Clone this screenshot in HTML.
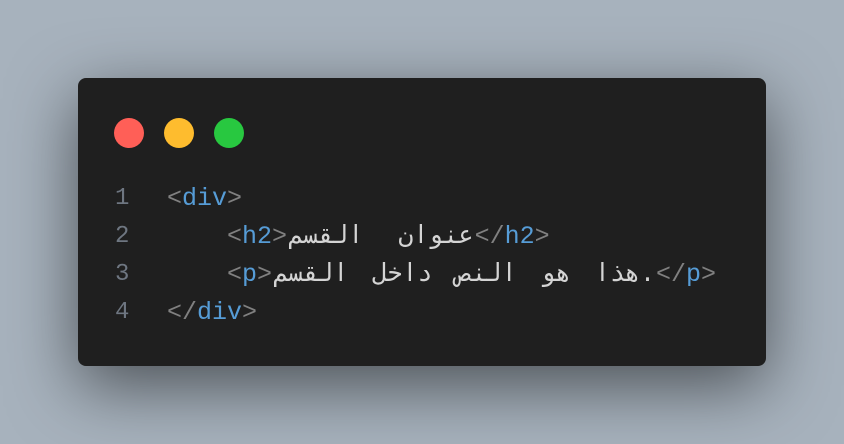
<!DOCTYPE html>
<html><head><meta charset="utf-8"><style>
html,body{margin:0;width:844px;height:444px;overflow:hidden;background:#a7b2bd;}
.card{position:absolute;left:78px;top:78px;width:688px;height:288px;background:#1f1f1f;border-radius:8px;box-shadow:0 20px 68px rgba(0,0,0,0.55);}
.dot{position:absolute;top:40px;width:30px;height:30px;border-radius:50%;}
.code{position:absolute;left:0;top:102px;font-family:"Liberation Mono","DejaVu Sans Mono",monospace;font-size:25px;line-height:38px;color:#d4d4d4;white-space:pre;}
.ln{position:absolute;left:37px;width:30px;color:#6e7681;font-size:24px;}
.l{position:absolute;left:89px;}
.b{color:#808080}.t{color:#569cd6}
.a2{word-spacing:20px;padding:0 1px}
.a3{word-spacing:9px;padding:0 1px}
</style></head><body>
<div class="card">
<div class="dot" style="left:36px;background:#ff5f57"></div>
<div class="dot" style="left:86px;background:#febc2e"></div>
<div class="dot" style="left:136px;background:#28c840"></div>
<div class="code">
<div class="ln" style="top:0">1</div><div class="l" style="top:0"><span class="b">&lt;</span><span class="t">div</span><span class="b">&gt;</span></div>
<div class="ln" style="top:38px">2</div><div class="l" style="top:38px">    <span class="b">&lt;</span><span class="t">h2</span><span class="b">&gt;</span><span class="a2">عنوان القسم</span><span class="b">&lt;/</span><span class="t">h2</span><span class="b">&gt;</span></div>
<div class="ln" style="top:76px">3</div><div class="l" style="top:76px">    <span class="b">&lt;</span><span class="t">p</span><span class="b">&gt;</span><span class="a3">هذا هو النص داخل القسم.</span><span class="b">&lt;/</span><span class="t">p</span><span class="b">&gt;</span></div>
<div class="ln" style="top:114px">4</div><div class="l" style="top:114px"><span class="b">&lt;/</span><span class="t">div</span><span class="b">&gt;</span></div>
</div>
</div>
</body></html>
